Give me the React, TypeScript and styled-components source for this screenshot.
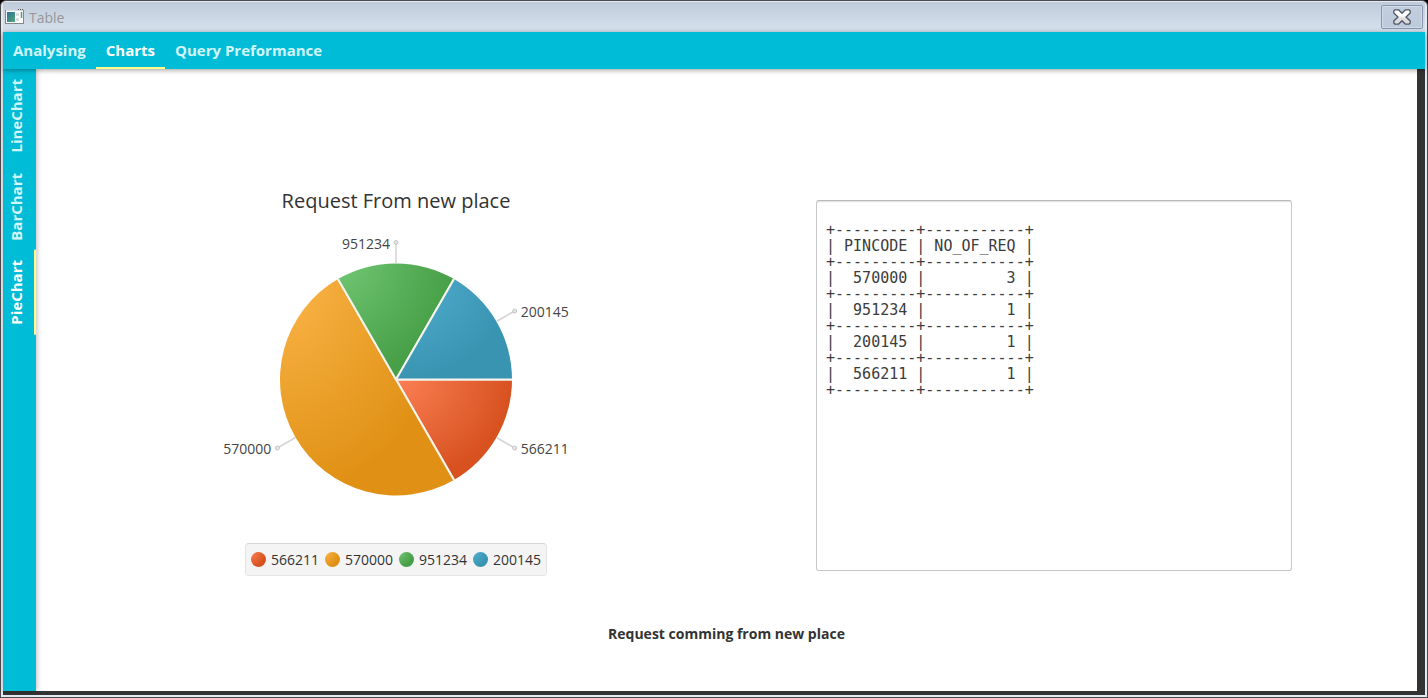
import React, { useState } from "react";
import styled, { createGlobalStyle } from "styled-components";

const GlobalStyle = createGlobalStyle`
  *, *::before, *::after { box-sizing: border-box; }
  body {
    margin: 0;
    background: #000;
    font-family: "Open Sans", "Noto Sans", sans-serif;
    font-size: 14px;
    color: #333;
  }
  button { font: inherit; }
`;

const Window = styled.div`
  display: flex;
  flex-direction: column;
  min-height: 100vh;
  padding: 2px;
  border: 1px solid #4b4a4c;
  border-radius: 6px 6px 0 0;
  background: #e3e9f5;
`;

const TitleBar = styled.header`
  display: flex;
  align-items: center;
  gap: 5px;
  height: 30px;
  margin: -1px 0 0;
  padding: 0 2px;
  background: linear-gradient(#bfcbd9, #d6e2ee);
`;

const WindowTitle = styled.h1`
  flex: 1;
  margin: 0;
  font-size: 14px;
  font-weight: 400;
  color: #979797;
`;

const CloseButton = styled.button`
  display: flex;
  align-items: center;
  justify-content: center;
  width: 42px;
  height: 24px;
  padding: 0;
  border: 1px solid #8896b0;
  border-radius: 2px;
  background: linear-gradient(#c3cedd, #bccad9);
  box-shadow: inset 0 0 0 1px #d0dbe8;
`;

const TopTabs = styled.nav`
  position: relative;
  z-index: 1;
  display: flex;
  height: 37px;
  background: #00bcd7;
  box-shadow: 0 1px 5px rgba(0, 0, 0, 0.4);
`;

const TopTab = styled.button<{ $active: boolean }>`
  padding: 0 10px;
  border: 0;
  border-bottom: 2px solid ${(p) => (p.$active ? "#ffff8d" : "transparent")};
  background: none;
  font-size: 15px;
  font-weight: 700;
  color: ${(p) => (p.$active ? "#fff" : "#d3f6fb")};
`;

const Body = styled.div`
  display: flex;
  flex: 1;
  padding: 0 8px 4px 0;
  background: #333;
`;

const SideTabs = styled.nav`
  position: relative;
  display: flex;
  flex-direction: column;
  width: 33px;
  background: #00bcd7;
  box-shadow: 1px 0 5px rgba(0, 0, 0, 0.25);
`;

const SideTab = styled.button<{ $active: boolean }>`
  display: flex;
  align-items: center;
  justify-content: center;
  width: 33px;
  padding: 10px 0 10px 6px;
  border: 0;
  border-left: 2px solid ${(p) => (p.$active ? "#ffff8d" : "transparent")};
  background: none;
  font-size: 15px;
  font-weight: 700;
  line-height: 20px;
  writing-mode: vertical-rl;
  transform: rotate(180deg);
  color: ${(p) => (p.$active ? "#fff" : "#d3f6fb")};
`;

const Content = styled.main`
  flex: 1;
  min-width: 0;
  padding-top: 116px;
  background: #fff;
`;

const Columns = styled.div`
  display: grid;
  grid-template-columns: 720fr 476fr;
  column-gap: 60px;
  padding-right: 125px;
`;

const ChartPanel = styled.figure`
  display: flex;
  flex-direction: column;
  align-items: center;
  margin: 0;
`;

const ChartTitle = styled.figcaption`
  font-size: 20px;
  line-height: 32px;
`;

const Pie = styled.svg`
  display: block;
  width: 360px;
  height: 280px;
  margin: 14px 0 32px;
  font-size: 14px;
  fill: #444;
`;

const Legend = styled.ul`
  display: flex;
  gap: 6px;
  margin: 0;
  padding: 5px;
  border: 1px solid #e4e4e4;
  border-top-color: #d4d4d4;
  border-radius: 4px;
  background: #f4f4f4;
  list-style: none;
`;

const LegendItem = styled.li`
  display: flex;
  align-items: center;
  gap: 5px;
  line-height: 21px;
`;

const Swatch = styled.span<{ $from: string; $to: string }>`
  width: 15px;
  height: 15px;
  border-radius: 50%;
  background: radial-gradient(circle at 0 0, ${(p) => p.$from}, ${(p) => p.$to} 15px);
`;

const Output = styled.textarea`
  display: block;
  width: 100%;
  height: 371px;
  margin-top: 15px;
  padding: 5px 9px;
  border: 1px solid #c8c8c8;
  border-top-color: #b8b8b8;
  border-radius: 3px;
  outline: 0;
  resize: none;
  background: #fff;
  box-shadow: inset 0 2px 2px -1px #ddd;
  font-family: "DejaVu Sans Mono", monospace;
  font-size: 15px;
  line-height: 16px;
  color: #3c3c3c;
`;

const Caption = styled.p`
  margin: 48px 0 40px;
  font-weight: 700;
  line-height: 20px;
  text-align: center;
`;

type Slice = { label: string; value: number; from: string; to: string };

const slices: Slice[] = [
  { label: "566211", value: 1, from: "#fa8055", to: "#d85220" },
  { label: "570000", value: 3, from: "#fbb549", to: "#e09115" },
  { label: "951234", value: 1, from: "#71c673", to: "#479f47" },
  { label: "200145", value: 1, from: "#54b0d0", to: "#3894b1" },
];

const report = `
+---------+-----------+
| PINCODE | NO_OF_REQ |
+---------+-----------+
|  570000 |         3 |
+---------+-----------+
|  951234 |         1 |
+---------+-----------+
|  200145 |         1 |
+---------+-----------+
|  566211 |         1 |
+---------+-----------+`;

const CX = 180;
const CY = 148.5;
const R = 116;

function point(angle: number, radius: number) {
  return { x: CX + radius * Math.cos(angle), y: CY + radius * Math.sin(angle) };
}

function PieChart() {
  const total = slices.reduce((sum, s) => sum + s.value, 0);
  let start = 0;
  return (
    <Pie viewBox="0 0 360 280" role="img" aria-label="Requests by pincode">
      {slices.map((s) => {
        const sweep = (s.value / total) * Math.PI * 2;
        const a = point(start, R);
        const b = point(start + sweep, R);
        const mid = start + sweep / 2;
        start += sweep;
        const edge = point(mid, R);
        const tip = point(mid, R + 21);
        const left = tip.x < CX + 1;
        return (
          <g key={s.label}>
            <defs>
              <radialGradient id={`slice-${s.label}`} cx="0" cy="0" r="1">
                <stop offset="0" stopColor={s.from} />
                <stop offset="1" stopColor={s.to} />
              </radialGradient>
            </defs>
            <path
              d={`M${CX} ${CY}L${a.x} ${a.y}A${R} ${R} 0 ${sweep > Math.PI ? 1 : 0} 1 ${b.x} ${b.y}Z`}
              fill={`url(#slice-${s.label})`}
            />
            <path d={`M${edge.x} ${edge.y}L${tip.x} ${tip.y}`} stroke="#d4d4d4" strokeWidth="1.5" />
            <circle cx={tip.x} cy={tip.y} r="2" fill="#e6e6e6" stroke="#c4c4c4" />
            <text x={tip.x + (left ? -6 : 6)} y={tip.y + 6} textAnchor={left ? "end" : "start"}>
              {s.label}
            </text>
            <path d={`M${CX} ${CY}L${a.x} ${a.y}`} stroke="#f6f4ee" strokeWidth="2" />
            <path d={`M${CX} ${CY}L${b.x} ${b.y}`} stroke="#f6f4ee" strokeWidth="2" />
          </g>
        );
      })}
    </Pie>
  );
}

function AppIcon() {
  return (
    <svg width="19" height="16" viewBox="0 0 19 16" aria-hidden="true">
      <defs>
        <linearGradient id="app-icon" x1="0" y1="0" x2="1" y2="1">
          <stop offset="0" stopColor="#2d6f9c" />
          <stop offset="1" stopColor="#53a779" />
        </linearGradient>
      </defs>
      <rect x="0.5" y="1.5" width="18" height="13" fill="#fafafa" stroke="#858789" />
      <path d="M1 1.5H18" stroke="#d9dee3" />
      <path d="M13 .5h1m1 0h1m1 0h1" stroke="#555" />
      <rect x="2" y="3" width="8" height="10" fill="url(#app-icon)" />
      <path d="M11 5.5h3M11 10.5h3" stroke="#ddd" strokeWidth="3" />
      <path d="M16.500 3v6" stroke="#4b9a8c" strokeWidth="1.5" />
    </svg>
  );
}

function CloseIcon() {
  return (
    <svg width="18" height="16" viewBox="0 0 18 16" aria-hidden="true">
      <defs>
        <linearGradient id="close-icon" x1="0" y1="0" x2="0" y2="1">
          <stop offset="0.4" stopColor="#fff" />
          <stop offset="0.6" stopColor="#dcdcdc" />
        </linearGradient>
      </defs>
      <path
        d="M2 .8H5.5L9 4.3L12.5 .8H16L17.2 2V4L13 8L17.2 12V14L16 15.2H12.5L9 11.7L5.5 15.2H2L.8 14V12L5 8L.8 4V2Z"
        fill="url(#close-icon)"
        stroke="#505668"
        strokeWidth="1.3"
        strokeLinejoin="round"
      />
    </svg>
  );
}

const topTabs = ["Analysing", "Charts", "Query Preformance"];
const sideTabs = ["LineChart", "BarChart", "PieChart"];

export default function App() {
  const [top, setTop] = useState("Charts");
  const [side, setSide] = useState("PieChart");
  return (
    <>
      <GlobalStyle />
      <Window>
        <TitleBar>
          <AppIcon />
          <WindowTitle>Table</WindowTitle>
          <CloseButton type="button" aria-label="Close">
            <CloseIcon />
          </CloseButton>
        </TitleBar>
        <TopTabs>
          {topTabs.map((t) => (
            <TopTab key={t} type="button" $active={t === top} onClick={() => setTop(t)}>
              {t}
            </TopTab>
          ))}
        </TopTabs>
        <Body>
          <SideTabs>
            {sideTabs.map((t) => (
              <SideTab key={t} type="button" $active={t === side} onClick={() => setSide(t)}>
                {t}
              </SideTab>
            ))}
          </SideTabs>
          <Content>
            <Columns>
              <ChartPanel>
                <ChartTitle>Request From new place</ChartTitle>
                <PieChart />
                <Legend>
                  {slices.map((s) => (
                    <LegendItem key={s.label}>
                      <Swatch $from={s.from} $to={s.to} />
                      {s.label}
                    </LegendItem>
                  ))}
                </Legend>
              </ChartPanel>
              <Output readOnly aria-label="Query output" value={report} />
            </Columns>
            <Caption>Request comming from new place</Caption>
          </Content>
        </Body>
      </Window>
    </>
  );
}
